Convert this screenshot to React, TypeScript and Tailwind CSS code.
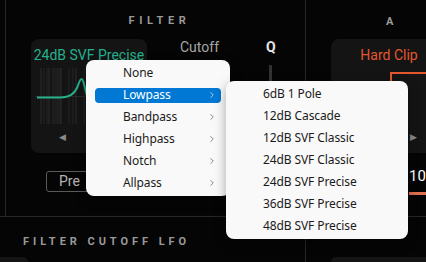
import { ChevronRight } from 'lucide-react'

const roboto = { fontFamily: 'Roboto, "Liberation Sans", sans-serif' }
const menuFont = { fontFamily: '"Noto Sans", "Open Sans", sans-serif' }

const filterTypes = ['None', 'Lowpass', 'Bandpass', 'Highpass', 'Notch', 'Allpass']
const lowpassModes = [
  '6dB 1 Pole',
  '12dB Cascade',
  '12dB SVF Classic',
  '24dB SVF Classic',
  '24dB SVF Precise',
  '36dB SVF Precise',
  '48dB SVF Precise',
]

function FilterGraph() {
  const grid = [43, 46, 49, 51, 55, 60, 63, 71, 75, 78, 86, 92, 97, 103, 110, 118, 127, 136]
  return (
    <svg width="108" height="56" viewBox="37 68 108 56" className="block">
      <rect x="55" y="68" width="8" height="56" fill="#1c1c1c" />
      {grid.map((x, i) => (
        <line key={x} x1={x} y1="68" x2={x} y2="124" stroke={i % 3 === 0 ? '#2c2c2c' : '#242424'} strokeWidth="1" />
      ))}
      <line x1="37" y1="96.5" x2="145" y2="96.5" stroke="#2a2a2a" />
      <path
        d="M39 97.5 L62 97.5 C72 97 76 94 79 88 C81 83 82 79 83.5 79 C85 79 86 84 88 92 L96 124"
        fill="none"
        stroke="#26b08c"
        strokeWidth="2"
      />
    </svg>
  )
}

function MenuRow({ label, active, arrow }: { label: string; active?: boolean; arrow?: boolean }) {
  return (
    <div className="h-[22px] px-[9px] flex items-center">
      <div
        className={`w-full h-[15px] rounded-[4px] flex items-center pl-[28px] pr-[4px] ${active ? 'bg-[#0078d4] text-white' : 'text-[#1b1b1b]'}`}
      >
        <span className="flex-1 leading-none tracking-[-0.1px]">{label}</span>
        {arrow && <ChevronRight size={10} strokeWidth={1.5} className={active ? 'text-white' : 'text-[#444]'} />}
      </div>
    </div>
  )
}

export default function App() {
  return (
    <div className="relative w-[426px] h-[262px] overflow-hidden bg-[#050505]" style={roboto}>
      <div className="flex h-full">
        {/* filter column */}
        <div className="w-[306px] shrink-0 flex flex-col border-r border-[#262626]">
          <div className="h-[217px] pl-[5px] border-b border-[#262626]">
            <div className="h-full border-l border-[#262626] flex flex-col">
              <div className="pt-[14px] text-center text-[11px] font-bold tracking-[0.42em] text-[#9a9a9a] leading-[13px] pl-[8px]">
                FILTER
              </div>
              <div className="flex mt-[12px] h-[114px]">
                <div className="ml-[25px] w-[116px] h-[114px] rounded-[8px] bg-[#141414] flex flex-col items-center">
                  <div className="mt-[8px] text-[14px] leading-[17px] text-[#26b08c] whitespace-nowrap">24dB SVF Precise</div>
                  <div className="mt-[4px] w-[108px]">
                    <FilterGraph />
                  </div>
                  <div className="w-full flex justify-between px-[28px] mt-[8px] text-[9px] leading-[10px] text-[#8a8a8a]">
                    <span>◀</span>
                    <span>▶</span>
                  </div>
                </div>
                <div className="ml-[33px] text-[14px] text-[#a6a6a6] leading-[16px]">Cutoff</div>
                <div className="ml-[47px] flex flex-col items-center">
                  <div className="text-[14px] font-bold text-[#e6e6e6] leading-[16px]">Q</div>
                  <div className="mt-[10px] w-[3px] h-[88px] bg-[#333] rounded-[1px]" />
                </div>
              </div>
              <div className="ml-[40px] mt-[18px] w-[62px] h-[21px] border border-[#5a5a5a] rounded-[3px] flex items-center pl-[12px] text-[14px] text-[#b5b5b5]">
                Pre
              </div>
            </div>
          </div>
          <div className="flex-1 flex flex-col">
            <div className="pt-[18px] pl-[23px] text-[11px] font-bold tracking-[0.36em] text-[#9a9a9a] leading-[13px]">
              FILTER CUTOFF LFO
            </div>
            <div className="mt-auto w-[28px] h-[5px] rounded-tr-[8px] bg-[#141414]" />
          </div>
        </div>

        {/* distortion column */}
        <div className="flex-1 flex flex-col">
          <div className="h-[217px] border-b border-[#262626] flex flex-col">
            <div className="pt-[15px] pl-[80px] text-[11px] font-bold text-[#9a9a9a] leading-[13px]">A</div>
            <div className="mt-[11px] ml-[25px] w-[116px] h-[114px] rounded-l-[8px] bg-[#141414] flex flex-col items-center overflow-hidden">
              <div className="mt-[8px] text-[14px] leading-[17px] text-[#e4572e] whitespace-nowrap">Hard Clip</div>
              <svg width="116" height="60" className="block mt-[3px]">
                <path d="M60 60 L60 6 L116 6" fill="none" stroke="#e4572e" strokeWidth="2" />
              </svg>
            </div>
            <div className="mt-[-21px] ml-[104px] text-[9px] leading-[10px] text-[#8a8a8a]">▶</div>
            <div className="mt-[25px] ml-[103px] text-[15px] text-white leading-[18px]">10</div>
            <div className="mt-[7px] ml-[103px] h-[3px] bg-[#e07050]" />
          </div>
          <div className="flex-1 flex flex-col">
            <div className="mt-auto ml-[25px] h-[5px] rounded-tl-[8px] bg-[#141414]" />
          </div>
        </div>
      </div>

      {/* context menu */}
      <div
        className="absolute left-[86px] top-[60px] w-[144px] py-[2px] rounded-[8px] bg-[#f9f9f9] shadow-[0_4px_12px_rgba(0,0,0,0.35)] text-[12px]"
        style={menuFont}
      >
        {filterTypes.map((t) => (
          <MenuRow key={t} label={t} active={t === 'Lowpass'} arrow={t !== 'None'} />
        ))}
      </div>
      <div
        className="absolute left-[226px] top-[81px] w-[182px] py-[2px] rounded-[8px] bg-[#f9f9f9] shadow-[0_4px_12px_rgba(0,0,0,0.35)] text-[12px]"
        style={menuFont}
      >
        {lowpassModes.map((t) => (
          <MenuRow key={t} label={t} />
        ))}
      </div>
    </div>
  )
}
